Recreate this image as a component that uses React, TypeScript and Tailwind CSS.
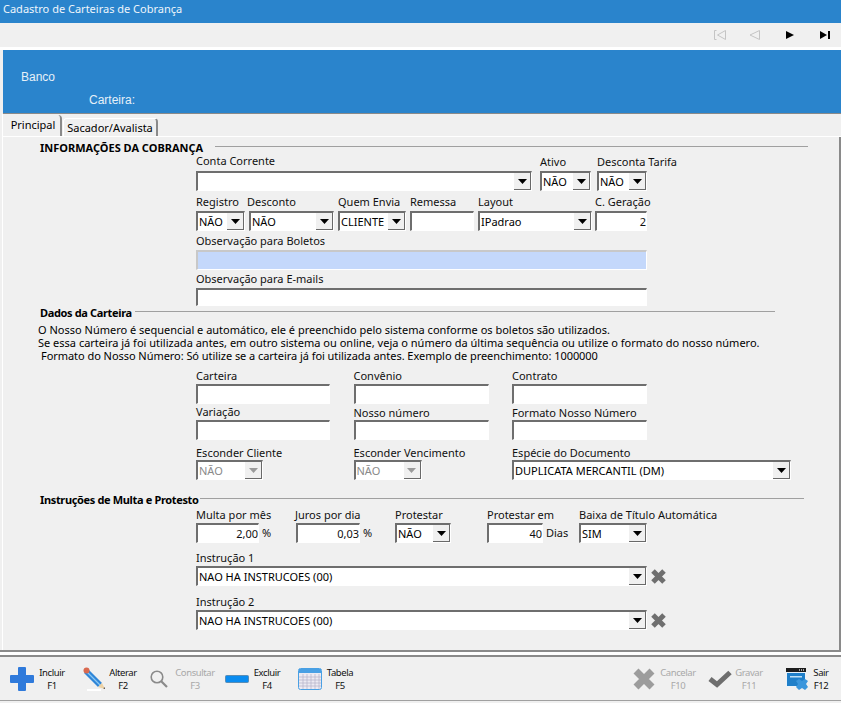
import * as React from "react";

const sunken = "border-t-2 border-l-2 border-r border-b border-t-[#6e6e6e] border-l-[#6e6e6e] border-r-white border-b-white";

function Arrow({ disabled }: { disabled?: boolean }) {
  return (
    <span className="flex h-full w-[17px] shrink-0 items-center justify-center border-r border-b border-[#696969] bg-[#f0f0f0]">
      <svg width="9" height="5" viewBox="0 0 9 5">
        <path d="M0 0h9L4.500 5z" fill={disabled ? "#9a9a9a" : "#000"} />
      </svg>
    </span>
  );
}

function Combo({ value, disabled, className }: { value?: string; disabled?: boolean; className?: string }) {
  return (
    <div className={`flex h-[20px] items-center bg-white ${sunken} ${className ?? "w-full"}`}>
      <span className={`min-w-0 flex-1 pl-[1px] leading-none whitespace-nowrap ${disabled ? "text-[#8a8a8a]" : "text-black"}`}>
        {value}
      </span>
      <Arrow disabled={disabled} />
    </div>
  );
}

function Input({ value, className }: { value?: string; className?: string }) {
  return (
    <div className={`flex h-[20px] items-center justify-end bg-white leading-none ${sunken} ${className ?? "w-full"}`}>
      {value}
    </div>
  );
}

function Label({ children, className }: { children: React.ReactNode; className?: string }) {
  return <div className={`h-[16px] leading-[14px] whitespace-nowrap ${className ?? ""}`}>{children}</div>;
}

function Section({ title, className, lineClass }: { title: string; className?: string; lineClass: string }) {
  return (
    <div className={`flex h-[13px] items-center pl-[37px] ${className ?? ""}`}>
      <span className="leading-none font-bold whitespace-nowrap text-black">{title}</span>
      <span className={`h-px -translate-y-px bg-[#a0a0a0] ${lineClass}`} />
    </div>
  );
}

function RemoveIcon() {
  return (
    <svg width="17" height="17" viewBox="0 0 17 17" className="ml-[3px] shrink-0">
      <path d="M3 3l11 11M14 3 3 14" stroke="#6f6f6f" strokeWidth="5" />
    </svg>
  );
}

function ToolButton({
  icon, label, keyName, disabled, className, textClass,
}: { icon: React.ReactNode; label: string; keyName: string; disabled?: boolean; className?: string; textClass: string }) {
  return (
    <div className={`flex items-center ${className ?? ""}`}>
      {icon}
      <div className={`flex flex-col items-center text-[9.5px] leading-[13px] tracking-[-0.4px] whitespace-nowrap ${textClass} ${disabled ? "text-[#a8a8a8]" : "text-[#111]"}`}>
        <span>{label}</span>
        <span>{keyName}</span>
      </div>
    </div>
  );
}

const PlusIcon = (
  <svg width="24" height="24" viewBox="0 0 24 24">
    <path d="M8 1a1 1 0 0 1 1-1h6a1 1 0 0 1 1 1v7h7a1 1 0 0 1 1 1v6a1 1 0 0 1-1 1h-7v7a1 1 0 0 1-1 1H9a1 1 0 0 1-1-1v-7H1a1 1 0 0 1-1-1V9a1 1 0 0 1 1-1h7z" fill="#2f7adb" />
  </svg>
);

const PencilIcon = (
  <svg width="23" height="24" viewBox="0 0 23 24">
    <path d="M4 23h14" stroke="#fff" strokeWidth="2" />
    <path d="M1 6l4-4 14 14-4 4z" fill="#2f86d8" />
    <path d="M3 4l14 14" stroke="#8cc8f4" strokeWidth="1.200" />
    <path d="M15 20l4-4 3 6z" fill="#ecd2a6" />
    <path d="M20.500 21.500 22 22l-.800-2z" fill="#222" />
    <circle cx="3.500" cy="3.500" r="3" fill="#d9694f" />
  </svg>
);

const SearchIcon = (
  <svg width="18" height="18" viewBox="0 0 18 18" fill="none">
    <circle cx="7" cy="7" r="5.800" stroke="#8a8a8a" strokeWidth="1.600" />
    <path d="M11 11l6 6" stroke="#8a8a8a" strokeWidth="2.200" />
  </svg>
);

const MinusIcon = (
  <svg width="24" height="8" viewBox="0 0 24 8">
    <rect x=".5" y=".5" width="23" height="7" rx="1" fill="#0a8cf0" stroke="#5a8db5" />
  </svg>
);

const TableIcon = (
  <svg width="24" height="22" viewBox="0 0 24 22">
    <rect x=".5" y=".5" width="23" height="21" rx="2" fill="#eceaf2" stroke="#49a0e4" />
    <rect x="1" y="1" width="22" height="4" fill="#49a0e4" />
    <path d="M5 6v15M9 6v15M13 6v15M17 6v15M21 6v15M1 9h22M1 12h22M1 15h22M1 18h22" stroke="#b5b2c8" strokeWidth=".7" />
  </svg>
);

const CancelIcon = (
  <svg width="24" height="24" viewBox="0 0 24 24">
    <path d="M4 4l16 16M20 4 4 20" stroke="#9c9c9c" strokeWidth="7" />
  </svg>
);

const CheckIcon = (
  <svg width="24" height="18" viewBox="0 0 24 18" fill="none">
    <path d="M2 9l7 5.500L22 2.500" stroke="#6e6e6e" strokeWidth="5" />
  </svg>
);

const ExitIcon = (
  <svg width="23" height="24" viewBox="0 0 23 24">
    <rect y="1" width="20" height="19" fill="#e8f2fa" />
    <rect y="1" width="20" height="4" fill="#1c1c1c" />
    <path d="M13 3h1M15 3h1M17 3h1" stroke="#cfcfcf" strokeWidth="1.500" />
    <rect x="1" y="6" width="18" height="13" fill="#1f7fc9" />
    <rect x="4" y="9" width="12" height="1.500" fill="#bfe0f6" />
    <path d="M13 12l3 2 3-2 3 2-2 3 2 3-3 3-3-2-3 2-3-3 2-3-2-3z" fill="#3a96dc" />
  </svg>
);

function NavIcons() {
  return (
    <div className="flex h-full items-center justify-end pr-[11px]">
      <svg width="12" height="10" viewBox="0 0 12 10" fill="none" stroke="#c4c4c4">
        <path d="M2.500.5H.5v9h2M11.500.5 3.500 5l8 4.500z" />
      </svg>
      <svg width="11" height="10" viewBox="0 0 11 10" fill="none" stroke="#c4c4c4" className="ml-[23px]">
        <path d="M10.500.5 1 5l9.500 4.500z" />
      </svg>
      <svg width="8" height="8" viewBox="0 0 8 8" className="ml-[26px]">
        <path d="M0 0l8 4-8 4z" fill="#000" />
      </svg>
      <svg width="10" height="8" viewBox="0 0 10 8" className="ml-[26px]">
        <path d="M0 0l7 4-7 4zM8 0h2v8H8z" fill="#000" />
      </svg>
    </div>
  );
}

export default function App() {
  return (
    <div className="flex h-[703px] w-[841px] flex-col overflow-hidden bg-[#f0f0f0] font-['Noto_Sans',sans-serif] text-[11px] text-[#101010]">
      <div className="flex h-[23px] shrink-0 items-center bg-[#2a84cc] pb-[4px] pl-[3px] text-[#eef5fb]">
        Cadastro de Carteiras de Cobrança
      </div>
      <div className="h-[24px] shrink-0">
        <NavIcons />
      </div>

      <div className="flex min-h-0 flex-1 flex-col border-t-[3px] border-white pl-[3px]">
        <div className="h-[64px] shrink-0 border-b border-[#8a8a8a] bg-[#2a84cc] font-['Liberation_Sans',sans-serif] text-[12px] text-[#e6f0f8]">
          <div className="pt-[20px] pl-[18px] leading-[14px]">Banco</div>
          <div className="pt-[9px] pl-[86px] leading-[14px]">Carteira:</div>
        </div>

        <div className="-ml-px flex h-[23px] shrink-0 items-end border-b border-l border-white pl-[1px]">
          <div className="flex h-[21px] w-[58px] items-center justify-center rounded-tr-sm border-r-2 border-[#8a8a8a] pb-[1px] pl-[2px] text-black">Principal</div>
          <div className="ml-[1px] flex h-[18px] w-[95px] items-center justify-center rounded-t-sm border-t border-r-2 border-l border-t-white border-r-[#8a8a8a] border-l-white pt-[1px] text-black">
            Sacador/Avalista
          </div>
        </div>

        <div className="-ml-px min-h-0 flex-1 border-r-2 border-l border-r-[#8a8a8a] border-l-white">
          <Section title="INFORMAÇÕES DA COBRANÇA" className="mt-[4px]" lineClass="ml-[12px] w-[593px]" />

          <div className="mt-[1px] ml-[193px] flex">
            <div className="w-[336px]">
              <Label className="-translate-y-px">Conta Corrente</Label>
              <Combo />
            </div>
            <div className="ml-[8px] w-[51px]">
              <Label>Ativo</Label>
              <Combo value="NÃO" />
            </div>
            <div className="ml-[6px] w-[50px]">
              <Label>Desconta Tarifa</Label>
              <Combo value="NÃO" />
            </div>
          </div>

          <div className="mt-[4px] ml-[193px] flex">
            <div className="w-[49px]"><Label>Registro</Label><Combo value="NÃO" /></div>
            <div className="ml-[4px] w-[85px]"><Label className="-ml-[2px]">Desconto</Label><Combo value="NÃO" /></div>
            <div className="ml-[4px] w-[68px]"><Label>Quem Envia</Label><Combo value="CLIENTE" /></div>
            <div className="ml-[4px] w-[64px]"><Label>Remessa</Label><Input /></div>
            <div className="ml-[4px] w-[114px]"><Label>Layout</Label><Combo value="IPadrao" /></div>
            <div className="ml-[3px] w-[52px]"><Label>C. Geração</Label><Input value="2" /></div>
          </div>

          <div className="mt-[3px] ml-[193px] w-[451px]">
            <Label>Observação para Boletos</Label>
            <div className="h-[20px] border-t-2 border-r border-b border-l-2 border-t-[#c8c8c8] border-r-white border-b-white border-l-[#c8c8c8] bg-[#c4d8fb]" />
            <Label className="mt-[2px]">Observação para E-mails</Label>
            <div className={`h-[18px] bg-white ${sunken}`} />
          </div>

          <Section title="Dados da Carteira" className="[&>span:first-child]:tracking-[-0.35px]" lineClass="ml-[3px] w-[640px]" />

          <div className="mt-[4px] pl-[35px] leading-[13px] whitespace-nowrap text-black">
            <p>O Nosso Número é sequencial e automático, ele é preenchido pelo sistema conforme os boletos são utilizados.</p>
            <p>Se essa carteira já foi utilizada antes, em outro sistema ou online, veja o número da última sequência ou utilize o formato do nosso número.</p>
            <p className="pl-[3px] tracking-[-0.05px]">Formato do Nosso Número: Só utilize se a carteira já foi utilizada antes. Exemplo de preenchimento: 1000000</p>
          </div>

          <div className="mt-[6px] ml-[193px] grid w-[451px] grid-cols-[134px_135px_135px] gap-x-[23.5px]">
            <div><Label className="translate-y-px">Carteira</Label><Input /></div>
            <div><Label className="translate-y-px">Convênio</Label><Input /></div>
            <div><Label className="translate-y-px">Contrato</Label><Input /></div>
            <div><Label className="translate-y-px">Variação</Label><Input /></div>
            <div><Label className="translate-y-[2px]">Nosso número</Label><Input /></div>
            <div><Label className="translate-y-[2px]">Formato Nosso Número</Label><Input /></div>
            <div className="mt-[4px]"><Label className="translate-y-[2px]">Esconder Cliente</Label><Combo value="NÃO" disabled className="w-[67px]" /></div>
            <div className="mt-[4px]"><Label className="translate-y-[2px]">Esconder Vencimento</Label><Combo value="NÃO" disabled className="w-[68px]" /></div>
            <div className="mt-[4px] w-[279px]"><Label className="translate-y-[2px]">Espécie do Documento</Label><Combo value="DUPLICATA MERCANTIL (DM)" /></div>
          </div>

          <Section title="Instruções de Multa e Protesto" className="mt-[13px] [&>span:first-child]:tracking-[-0.35px]" lineClass="ml-[1px] w-[604px]" />

          <div className="mt-[1px] ml-[192px] flex">
            <div className="w-[100px]">
              <Label className="translate-y-px pl-[1px]">Multa por mês</Label>
              <div className="ml-[1px] flex items-center">
                <Input value="2,00" className="w-[63px]" />
                <span className="ml-[3px]">%</span>
              </div>
            </div>
            <div className="w-[100px]">
              <Label className="translate-y-px">Juros por dia</Label>
              <div className="ml-[1px] flex items-center">
                <Input value="0,03" className="w-[64px]" />
                <span className="ml-[3px]">%</span>
              </div>
            </div>
            <div className="w-[92px]">
              <Label className="translate-y-px">Protestar</Label>
              <Combo value="NÃO" className="w-[56px]" />
            </div>
            <div className="w-[92px]">
              <Label className="translate-y-px">Protestar em</Label>
              <div className="flex items-center">
                <Input value="40" className="w-[56px]" />
                <span className="ml-[3px]">Dias</span>
              </div>
            </div>
            <div className="w-[136px]">
              <Label className="translate-y-px">Baixa de Título Automática</Label>
              <Combo value="SIM" className="w-[68px]" />
            </div>
          </div>

          <div className="mt-[7px] ml-[193px]">
            <Label className="translate-y-px">Instrução 1</Label>
            <div className="flex items-center">
              <Combo value="NAO HA INSTRUCOES (00)" className="w-[451px]" />
              <RemoveIcon />
            </div>
            <Label className="mt-[8px] translate-y-px">Instrução 2</Label>
            <div className="flex items-center">
              <Combo value="NAO HA INSTRUCOES (00)" className="w-[451px]" />
              <RemoveIcon />
            </div>
          </div>
        </div>
      </div>

      <div className="h-[7px] shrink-0 border-t-2 border-b-2 border-t-[#8a8a8a] border-b-[#8a8a8a] bg-white" />

      <div className="flex h-[44px] shrink-0 items-center justify-between border-b border-[#a0a0a0]">
        <div className="flex items-center">
          <ToolButton icon={PlusIcon} label="Incluir" keyName="F1" className="ml-[10px] gap-[4px]" textClass="w-[28px]" />
          <ToolButton icon={PencilIcon} label="Alterar" keyName="F2" className="ml-[17px] gap-[4px]" textClass="w-[26px]" />
          <ToolButton icon={SearchIcon} label="Consultar" keyName="F3" disabled className="ml-[14px] gap-[8px]" textClass="w-[38px]" />
          <ToolButton icon={MinusIcon} label="Excluir" keyName="F4" className="ml-[11px] gap-[4px]" textClass="w-[28px]" />
          <ToolButton icon={TableIcon} label="Tabela" keyName="F5" className="ml-[17px] gap-[4px]" textClass="w-[28px]" />
        </div>
        <div className="flex items-center pr-[12px]">
          <ToolButton icon={CancelIcon} label="Cancelar" keyName="F10" disabled className="gap-[3px]" textClass="w-[38px]" />
          <ToolButton icon={CheckIcon} label="Gravar" keyName="F11" disabled className="ml-[11px] gap-[3px]" textClass="w-[28px]" />
          <ToolButton icon={ExitIcon} label="Sair" keyName="F12" className="ml-[23px] gap-[4px]" textClass="w-[16px]" />
        </div>
      </div>
      <div className="h-[2px] shrink-0" />
    </div>
  );
}
